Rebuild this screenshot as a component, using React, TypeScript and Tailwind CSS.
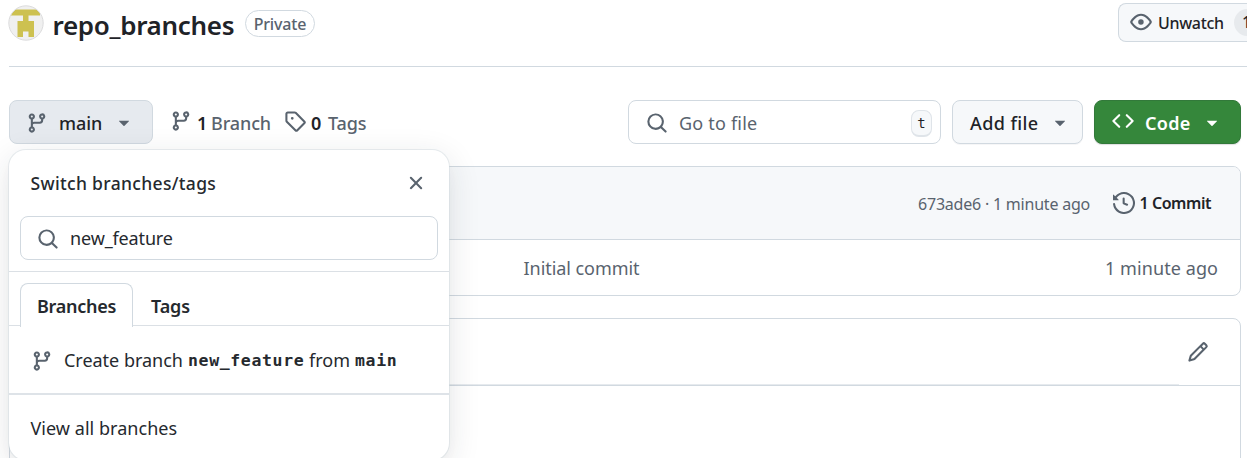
import type { ReactNode } from "react";

const paths = {
  branch:
    "M9.5 3.25a2.25 2.25 0 1 1 3 2.122V6A2.5 2.5 0 0 1 10 8.5H6a1 1 0 0 0-1 1v1.128a2.251 2.251 0 1 1-1.5 0V5.372a2.25 2.25 0 1 1 1.5 0v1.836A2.493 2.493 0 0 1 6 7h4a1 1 0 0 0 1-1v-.628A2.25 2.25 0 0 1 9.5 3.25Zm-6 0a.75.75 0 1 0 1.5 0 .75.75 0 0 0-1.5 0Zm8.25-.75a.75.75 0 1 0 0 1.5.75.75 0 0 0 0-1.5ZM4.25 12a.75.75 0 1 0 0 1.5.75.75 0 0 0 0-1.5Z",
  tag: "M1 7.775V2.75C1 1.784 1.784 1 2.75 1h5.025c.464 0 .91.184 1.238.513l6.25 6.25a1.75 1.75 0 0 1 0 2.474l-5.026 5.026a1.75 1.75 0 0 1-2.474 0l-6.25-6.25A1.752 1.752 0 0 1 1 7.775Zm1.5 0c0 .066.026.13.073.177l6.25 6.25a.25.25 0 0 0 .354 0l5.025-5.025a.25.25 0 0 0 0-.354l-6.25-6.25a.25.25 0 0 0-.177-.073H2.75a.25.25 0 0 0-.25.25ZM6 5a1 1 0 1 1 0 2 1 1 0 0 1 0-2Z",
  search:
    "M10.68 11.74a6 6 0 0 1-7.922-8.982 6 6 0 0 1 8.982 7.922l3.04 3.04a.749.749 0 0 1-.326 1.275.749.749 0 0 1-.734-.215ZM11.5 7a4.499 4.499 0 1 0-8.997 0A4.499 4.499 0 0 0 11.5 7Z",
  close:
    "M3.72 3.72a.75.75 0 0 1 1.06 0L8 6.94l3.22-3.22a.749.749 0 0 1 1.275.326.749.749 0 0 1-.215.734L9.06 8l3.22 3.22a.749.749 0 0 1-.326 1.275.749.749 0 0 1-.734-.215L8 9.06l-3.22 3.22a.751.751 0 0 1-1.042-.018.751.751 0 0 1-.018-1.042L6.94 8 3.72 4.78a.75.75 0 0 1 0-1.06Z",
  caret:
    "m4.427 7.427 3.396 3.396a.25.25 0 0 0 .354 0l3.396-3.396A.25.25 0 0 0 11.396 7H4.604a.25.25 0 0 0-.177.427Z",
  eye: "M8 2c1.981 0 3.671.992 4.933 2.078 1.27 1.091 2.187 2.345 2.637 3.023a1.62 1.62 0 0 1 0 1.798c-.45.678-1.367 1.932-2.637 3.023C11.67 13.008 9.981 14 8 14c-1.981 0-3.671-.992-4.933-2.078C1.797 10.83.88 9.576.43 8.898a1.62 1.62 0 0 1 0-1.798c.45-.677 1.367-1.931 2.637-3.022C4.33 2.992 6.019 2 8 2ZM1.679 7.932a.12.12 0 0 0 0 .136c.411.622 1.241 1.75 2.366 2.717C5.176 11.758 6.527 12.5 8 12.5c1.473 0 2.825-.742 3.955-1.715 1.124-.967 1.954-2.096 2.366-2.717a.12.12 0 0 0 0-.136c-.412-.621-1.242-1.75-2.366-2.717C10.824 4.242 9.473 3.5 8 3.5c-1.473 0-2.825.742-3.955 1.715-1.124.967-1.954 2.096-2.366 2.717ZM8 10a2 2 0 1 1-.001-3.999A2 2 0 0 1 8 10Z",
  history:
    "m.427 1.927 1.215 1.215a8.002 8.002 0 1 1-1.6 5.685.75.75 0 1 1 1.493-.154 6.5 6.5 0 1 0 1.18-4.458l1.358 1.358A.25.25 0 0 1 3.896 6H.25A.25.25 0 0 1 0 5.75V2.104a.25.25 0 0 1 .427-.177ZM7.75 4a.75.75 0 0 1 .75.75v2.992l2.028.812a.75.75 0 0 1-.557 1.392l-2.5-1A.751.751 0 0 1 7 8.25v-3.5A.75.75 0 0 1 7.75 4Z",
  code: "m11.28 3.22 4.25 4.25a.75.75 0 0 1 0 1.06l-4.25 4.25a.749.749 0 0 1-1.275-.326.749.749 0 0 1 .215-.734L13.94 8l-3.72-3.72a.749.749 0 0 1 .326-1.275.749.749 0 0 1 .734.215Zm-6.56 0a.751.751 0 0 1 1.042.018.751.751 0 0 1 .018 1.042L2.06 8l3.72 3.72a.749.749 0 0 1-.326 1.275.749.749 0 0 1-.734-.215L.47 8.53a.75.75 0 0 1 0-1.06Z",
  pencil:
    "M11.013 1.427a1.75 1.75 0 0 1 2.474 0l1.086 1.086a1.75 1.75 0 0 1 0 2.474l-8.61 8.61c-.21.21-.47.364-.756.445l-3.251.93a.75.75 0 0 1-.927-.928l.929-3.25c.081-.286.235-.547.445-.758l8.61-8.61Zm.176 4.823L9.75 4.81l-6.286 6.287a.253.253 0 0 0-.064.108l-.558 1.953 1.953-.558a.253.253 0 0 0 .108-.064Zm1.238-3.763a.25.25 0 0 0-.354 0L10.811 3.75l1.439 1.44 1.263-1.263a.25.25 0 0 0 0-.354Z",
};

function Icon({ name, className = "" }: { name: keyof typeof paths; className?: string }) {
  return (
    <svg viewBox="0 0 16 16" fill="currentColor" className={`size-[22px] shrink-0 ${className}`}>
      <path d={paths[name]} />
    </svg>
  );
}

/* Single-line text cell that never shrinks. */
function T({ className, children }: { className: string; children: ReactNode }) {
  return <span className={`shrink-0 whitespace-nowrap ${className}`}>{children}</span>;
}

function Header() {
  return (
    <header className="flex h-[67px] shrink-0 items-start">
      <div className="flex h-[66px] flex-1 items-start">
        <svg viewBox="0 0 36 36" className="mt-[5px] ml-[8px] size-9 shrink-0">
          <clipPath id="avatar">
            <circle cx="18" cy="18" r="17" />
          </clipPath>
          <circle cx="18" cy="18" r="17.2" fill="#f0f0f0" />
          <path
            clipPath="url(#avatar)"
            fill="#cdc150"
            d="M3 4.5h29v6H20.500v5.500h5.500v16h-5.500v-5.500h-5.500v5.500H9.500V16H15v-5.500H3z"
          />
          <circle cx="18" cy="18" r="17.200" fill="none" stroke="#dcdcdd" />
        </svg>
        <T className="mt-[7px] ml-[8.5px] w-[192.5px] text-[26px] leading-[36px] font-semibold tracking-[-0.32px]">
          repo_branches
        </T>
        <span className="mt-[10px] flex h-[27px] w-[70px] shrink-0 items-center justify-center rounded-full border border-[#d1d9e0] text-[16px] leading-none font-medium tracking-[-0.15px] text-[#59636e]">
          Private
        </span>
      </div>
      <button className="mt-[3px] flex h-[39px] w-[129px] shrink-0 items-center overflow-hidden rounded-l-[8px] border border-r-0 border-[#d1d9e0] bg-[#f6f8fa] pl-[11px]">
        <Icon name="eye" className="mb-px text-[#59636e]" />
        <T className="ml-[6px] w-[76px] text-left text-[16px] font-medium tracking-[-0.3px]">Unwatch</T>
        <T className="h-[27px] w-[28px] rounded-full bg-[#e7eaed] pl-[8px] text-left text-[16px] leading-[27px] font-medium">
          1
        </T>
      </button>
    </header>
  );
}

function Toolbar() {
  return (
    <div className="flex h-[44px] shrink-0 items-center text-[18px] leading-[26px]">
      <button className="flex h-[44px] w-[144px] shrink-0 items-center rounded-[8px] border border-[#d1d9e0] bg-[#e6eaef] pl-4">
        <Icon name="branch" className="mt-[2px] text-[#59636e]" />
        <T className="mt-[2px] ml-[11px] w-[54px] text-left font-medium tracking-[-0.05px]">main</T>
        <Icon name="caret" className="text-[#59636e]" />
      </button>
      <Icon name="branch" className="mb-[3px] ml-[17px] text-[#59636e]" />
      <T className="mt-[2px] ml-[5px] w-[14px] font-semibold">1</T>
      <T className="mt-[2px] w-[73px] font-medium tracking-[-0.12px] text-[#59636e]">Branch</T>
      <Icon name="tag" className="mb-[3px] text-[#59636e]" />
      <T className="mt-[2px] ml-[5px] w-[17px] font-semibold">0</T>
      <T className="mt-[2px] font-medium tracking-[-0.1px] text-[#59636e]">Tags</T>
      <div className="ml-auto flex h-[44px] w-[313px] items-center rounded-[8px] border border-[#d1d9e0] pl-[17px]">
        <Icon name="search" className="mt-px text-[#59636e]" />
        <T className="mt-[2px] ml-[11px] tracking-[0.2px] text-[#59636e]">Go to file</T>
        <kbd className="mt-[2px] mr-[8px] ml-auto flex h-[27px] w-[21px] items-center justify-center rounded-[8px] border border-b-2 border-[#dfe4e9] bg-[#f6f8fa] font-['DejaVu_Sans_Mono',monospace] text-[14px] leading-none">
          t
        </kbd>
      </div>
      <button className="ml-[11px] flex h-[44px] w-[131px] shrink-0 items-center rounded-[8px] border border-[#d1d9e0] bg-[#f6f8fa] pl-[17px] shadow-[0_1px_0_rgba(31,35,40,0.04)]">
        <T className="mt-[2px] w-[79px] text-left font-medium tracking-[0.4px]">Add file</T>
        <Icon name="caret" className="text-[#59636e]" />
      </button>
      <button className="mr-[6px] ml-[11px] flex h-[44px] w-[147px] shrink-0 items-center rounded-[8px] border border-[#32793a] bg-[#35873b] pl-[17px] text-white shadow-[0_1px_1px_rgba(31,35,40,0.15)]">
        <Icon name="code" className="mb-[3px]" />
        <T className="mt-[2px] ml-[11px] w-[56px] text-left font-semibold tracking-[0.3px]">Code</T>
        <Icon name="caret" />
      </button>
    </div>
  );
}

function Files() {
  return (
    <section className="mt-[22px] mr-[6px] flex h-[130px] shrink-0 flex-col overflow-hidden rounded-[8px] border border-[#d1d9e0]">
      <div className="flex h-[73px] shrink-0 items-center justify-end border-b border-[#d1d9e0] bg-[#f6f8fa] text-[16px]">
        <T className="mt-[2px] w-[195px] tracking-[-0.21px] text-[#59636e]">673ade6 · 1 minute ago</T>
        <Icon name="history" className="mb-px text-[#59636e]" />
        <T className="ml-[4.5px] w-[100.5px] font-semibold tracking-[-0.45px]">1 Commit</T>
      </div>
      <div className="flex flex-1 items-center justify-between pt-[2px] pr-[22px] pl-[513.5px] text-[18px] text-[#59636e]">
        <T className="tracking-[-0.05px]">Initial commit</T>
        <T className="tracking-[0.08px]">1 minute ago</T>
      </div>
    </section>
  );
}

function Readme() {
  return (
    <section className="mt-[22px] mr-[6px] flex h-[200px] shrink-0 flex-col rounded-[8px] border border-[#d1d9e0]">
      <div className="flex h-[67px] shrink-0 items-stretch border-b border-[#d1d9e0]">
        <div className="w-[1169px] border-b border-[#e6eaee]" />
        <Icon name="pencil" className="mt-[22px] ml-[8px] text-[#59636e]" />
      </div>
    </section>
  );
}

function BranchMenu() {
  return (
    <div className="absolute top-[150px] left-[9px] flex h-[310px] w-[440px] flex-col rounded-[17px] bg-white text-[18px] text-[#25292e] shadow-[0_0_0_1px_rgba(209,217,224,0.5),0_8px_16px_-4px_rgba(37,41,46,0.04),0_8px_33px_0_rgba(37,41,46,0.12)]">
      <div className="flex h-[66px] shrink-0 items-center justify-between pr-[22px] pl-[21.5px]">
        <T className="text-[17.5px] font-medium tracking-[0.33px]">Switch branches/tags</T>
        <Icon name="close" className="text-[#59636e]" />
      </div>
      <div className="mr-[11px] ml-[11px] flex h-[44px] shrink-0 items-center rounded-[8px] border border-[#d1d9e0] pl-[16px]">
        <Icon name="search" className="mt-px text-[#59636e]" />
        <T className="ml-[11px] tracking-[-0.14px]">new_feature</T>
      </div>
      <div className="mt-[11px] flex h-[55px] shrink-0 border-t border-b border-[#dbe0e5] px-[11px] pt-[11px] font-semibold">
        <div className="-mb-px flex h-[44px] w-[113px] shrink-0 items-center rounded-t-[8px] border border-b-0 border-[#d1d9e0] bg-white pl-4">
          <T className="mt-[2px] tracking-[-0.28px]">Branches</T>
        </div>
        <div className="flex h-[44px] items-center pl-[18px]">
          <T className="mt-[2px] tracking-[-0.12px]">Tags</T>
        </div>
      </div>
      <div className="flex h-[69px] shrink-0 items-center border-b-2 border-[#dee3e8] pl-[22px]">
        <Icon name="branch" className="mt-[3px] text-[#59636e]" />
        <T className="mt-[2px] ml-[11px] w-[124px] tracking-[-0.02px]">Create branch</T>
        <T className="mt-[3px] w-[121px] font-['DejaVu_Sans_Mono',monospace] text-[16.5px] font-bold tracking-[0.64px]">
          new_feature
        </T>
        <T className="mt-[2px] w-[46px]">from</T>
        <T className="mt-[3px] font-['DejaVu_Sans_Mono',monospace] text-[16.5px] font-bold tracking-[0.64px]">main</T>
      </div>
      <div className="flex h-[65px] shrink-0 items-center pt-px pl-[21.5px]">
        <T className="tracking-[0.04px]">View all branches</T>
      </div>
    </div>
  );
}

export default function App() {
  return (
    <div className="relative flex h-[458px] w-[1247px] flex-col overflow-hidden bg-white font-['Noto_Sans','Open_Sans',sans-serif] text-[#1f2328]">
      <Header />
      <div className="-mt-px ml-[9px] h-px shrink-0 bg-[#d1d9e0]" />
      <main className="mt-[33px] flex flex-1 flex-col pl-[9px]">
        <Toolbar />
        <Files />
        <Readme />
      </main>
      <BranchMenu />
    </div>
  );
}
